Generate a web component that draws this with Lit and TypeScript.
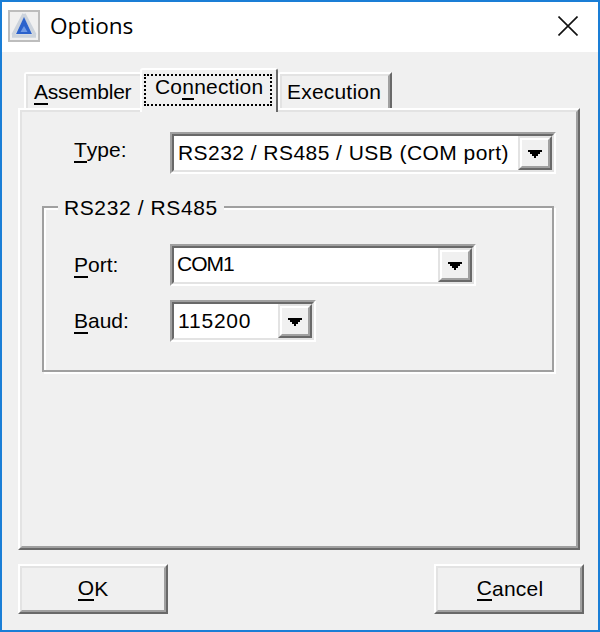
import { LitElement, html, css } from "lit";
import { customElement } from "lit/decorators.js";

const arrow = html`<svg class="arrow" width="14" height="8" viewBox="0 0 14 8" shape-rendering="crispEdges"><path d="M0 0h14v2h-2v2h-2v2H8v2H6V6H4V4H2V2H0z" fill="#000"/></svg>`;

@customElement("app-root")
export class AppRoot extends LitElement {
  static styles = css`
    :host { display: block; width: 600px; height: 632px; font-family: "Liberation Sans", Arial, sans-serif; color: #000; }
    * { box-sizing: border-box; }
    .window { width: 600px; height: 632px; border: 2px solid #1a7ed6; background: #f0f0f0; display: flex; flex-direction: column; }
    .title { height: 50px; flex: none; background: #fff; display: flex; align-items: center; padding-left: 6px; }
    .title svg.icon { display: block; margin: -2px 11px 0 0; }
    .title span { font: 22.6px "Open Sans", "Noto Sans", sans-serif; color: #000; flex: 1; margin: -4px 0 0 -1px; }
    .close { margin: -2px 20px 0 0; display: block; }
    .text { font-size: 21px; line-height: 24px; white-space: nowrap; }
    u { text-decoration: none; border-bottom: 2px solid #000; display: inline-block; line-height: 22px; height: 24px; }
    .tabs { display: flex; align-items: flex-end; margin: 16px 0 0 22px; height: 40px; position: relative; z-index: 1; }
    .tab { background: #f0f0f0; height: 36px; border-top: 2px solid #fff; border-left: 2px solid #fff; border-top-left-radius: 3px; display: flex; }
    .tab .in { border-top: 2px solid #e3e3e3; border-left: 2px solid #e3e3e3; flex: 1; }
    .assembler { width: 116px; }
    .assembler .in { padding: 4px 0 0 6px; letter-spacing: -0.2px; }
    .connection { width: 138px; height: 44px; margin-bottom: -4px; border-top-right-radius: 3px; border-right: 2px solid #696969; position: relative; }
    .connection .in { border-left: 0; border-top: 0; padding: 4px 2px 0 2px; }
    .focus { height: 32px; width: 128px; border: 2px dotted #000; padding-left: 9px; line-height: 22px; letter-spacing: 0.2px; }
    .execution { width: 114px; border-right: 2px solid #696969; }
    .execution .in { padding: 4px 0 0 5px; border-right: 2px solid #a0a0a0; letter-spacing: 0.2px; }
    .panel { margin-left: 16px; width: 562px; height: 442px; border: 2px solid; border-color: #fff #696969 #696969 #fff; background: #f0f0f0; }
    .panel-in { height: 100%; border: 2px solid; border-color: #e3e3e3 #a0a0a0 #a0a0a0 #e3e3e3; padding-top: 20px; }
    .row { display: grid; grid-template-columns: 52px 96px auto; justify-content: start; align-items: center; }
    .row > .text { grid-column: 2; }
    .type-l { margin-top: -5px; }
    .combo { grid-column: 3; height: 42px; border: 2px solid; border-color: #a0a0a0 #fff #fff #a0a0a0; }
    .combo-in { height: 100%; border: 2px solid; border-color: #696969 #e3e3e3 #e3e3e3 #696969; background: #fff; display: flex; }
    .val { flex: 1; padding-left: 4px; padding-top: 5px; }
    .val-type { padding-left: 4px; letter-spacing: 0.45px; }
    .val-port { padding: 4px 0 0 3px; letter-spacing: -1px; }
    .val-baud { padding-left: 4px; letter-spacing: 0.8px; }
    .btn { width: 34px; height: 100%; flex: none; border: 2px solid; border-color: #e3e3e3 #696969 #696969 #e3e3e3; background: #f0f0f0; }
    .btn-in { height: 100%; border: 2px solid; border-color: #fff #a0a0a0 #a0a0a0 #fff; display: flex; align-items: center; justify-content: center; padding-top: 2px; }
    .arrow { display: block; }
    .type-c { width: 386px; }
    .port-c { width: 306px; }
    .baud-c { width: 146px; }
    .group { position: relative; margin: 32px 0 0 20px; width: 512px; height: 166px; border: 2px solid #a0a0a0; box-shadow: 2px 2px 0 #fff, inset 2px 2px 0 #fff; padding-top: 36px; display: flex; flex-direction: column; gap: 14px; }
    .legend { position: absolute; left: 14px; top: -12px; padding: 0 6px; background: #f0f0f0; letter-spacing: 0.6px; }
    .group .row { grid-template-columns: 30px 96px auto; }
    .footer { display: flex; justify-content: space-between; margin: 14px 14px 0 16px; }
    .dlg { width: 150px; height: 50px; border: 2px solid; border-color: #fff #696969 #696969 #fff; background: #f0f0f0; padding: 0; font: inherit; color: inherit; }
    .dlg-in { height: 100%; border: 2px solid; border-color: #e3e3e3 #a0a0a0 #a0a0a0 #e3e3e3; display: flex; align-items: center; justify-content: center; }
    .cancel { letter-spacing: 0.2px; padding-left: 2px; }
  `;

  render() {
    return html`
      <div class="window">
        <div class="title">
          <svg class="icon" width="32" height="32" viewBox="0 0 32 32">
            <rect x="1" y="1" width="30" height="30" fill="#f0f0f0" stroke="#bdbdbd" stroke-width="2"/>
            <path d="M16 4 L5 25 M16 4 L27 25 M4 26 H28" stroke="#ccd3dc" stroke-width="3.5" fill="none"/>
            <path d="M16 7 L24 24 L8 24 Z" fill="#2b62cc"/>
            <path d="M16 16 L19.5 22 L12.5 22 Z" fill="#6f9ae6"/>
          </svg>
          <span>Options</span>
          <svg class="close" width="20" height="20" viewBox="0 0 20 20"><path d="M0.5 0.5 L19.5 19.5 M19.5 0.5 L0.5 19.5" stroke="#111" stroke-width="1.6" fill="none"/></svg>
        </div>
        <div class="tabs">
          <div class="tab assembler"><div class="in text"><u>A</u>ssembler</div></div>
          <div class="tab connection"><div class="in"><div class="focus text">Co<u>n</u>nection</div></div></div>
          <div class="tab execution"><div class="in text">Execution</div></div>
        </div>
        <div class="panel"><div class="panel-in">
          <div class="row">
            <div class="text type-l"><u>T</u>ype:</div>
            <div class="combo type-c"><div class="combo-in"><div class="val val-type text">RS232 / RS485 / USB (COM port)</div><div class="btn"><div class="btn-in">${arrow}</div></div></div></div>
          </div>
          <div class="group">
            <div class="legend text">RS232 / RS485</div>
            <div class="row">
              <div class="text"><u>P</u>ort:</div>
              <div class="combo port-c"><div class="combo-in"><div class="val val-port text">COM1</div><div class="btn"><div class="btn-in">${arrow}</div></div></div></div>
            </div>
            <div class="row">
              <div class="text"><u>B</u>aud:</div>
              <div class="combo baud-c"><div class="combo-in"><div class="val val-baud text">115200</div><div class="btn"><div class="btn-in">${arrow}</div></div></div></div>
            </div>
          </div>
        </div></div>
        <div class="footer">
          <button class="dlg"><div class="dlg-in text"><u>O</u>K</div></button>
          <button class="dlg"><div class="dlg-in text cancel"><u>C</u>ancel</div></button>
        </div>
      </div>
    `;
  }
}
